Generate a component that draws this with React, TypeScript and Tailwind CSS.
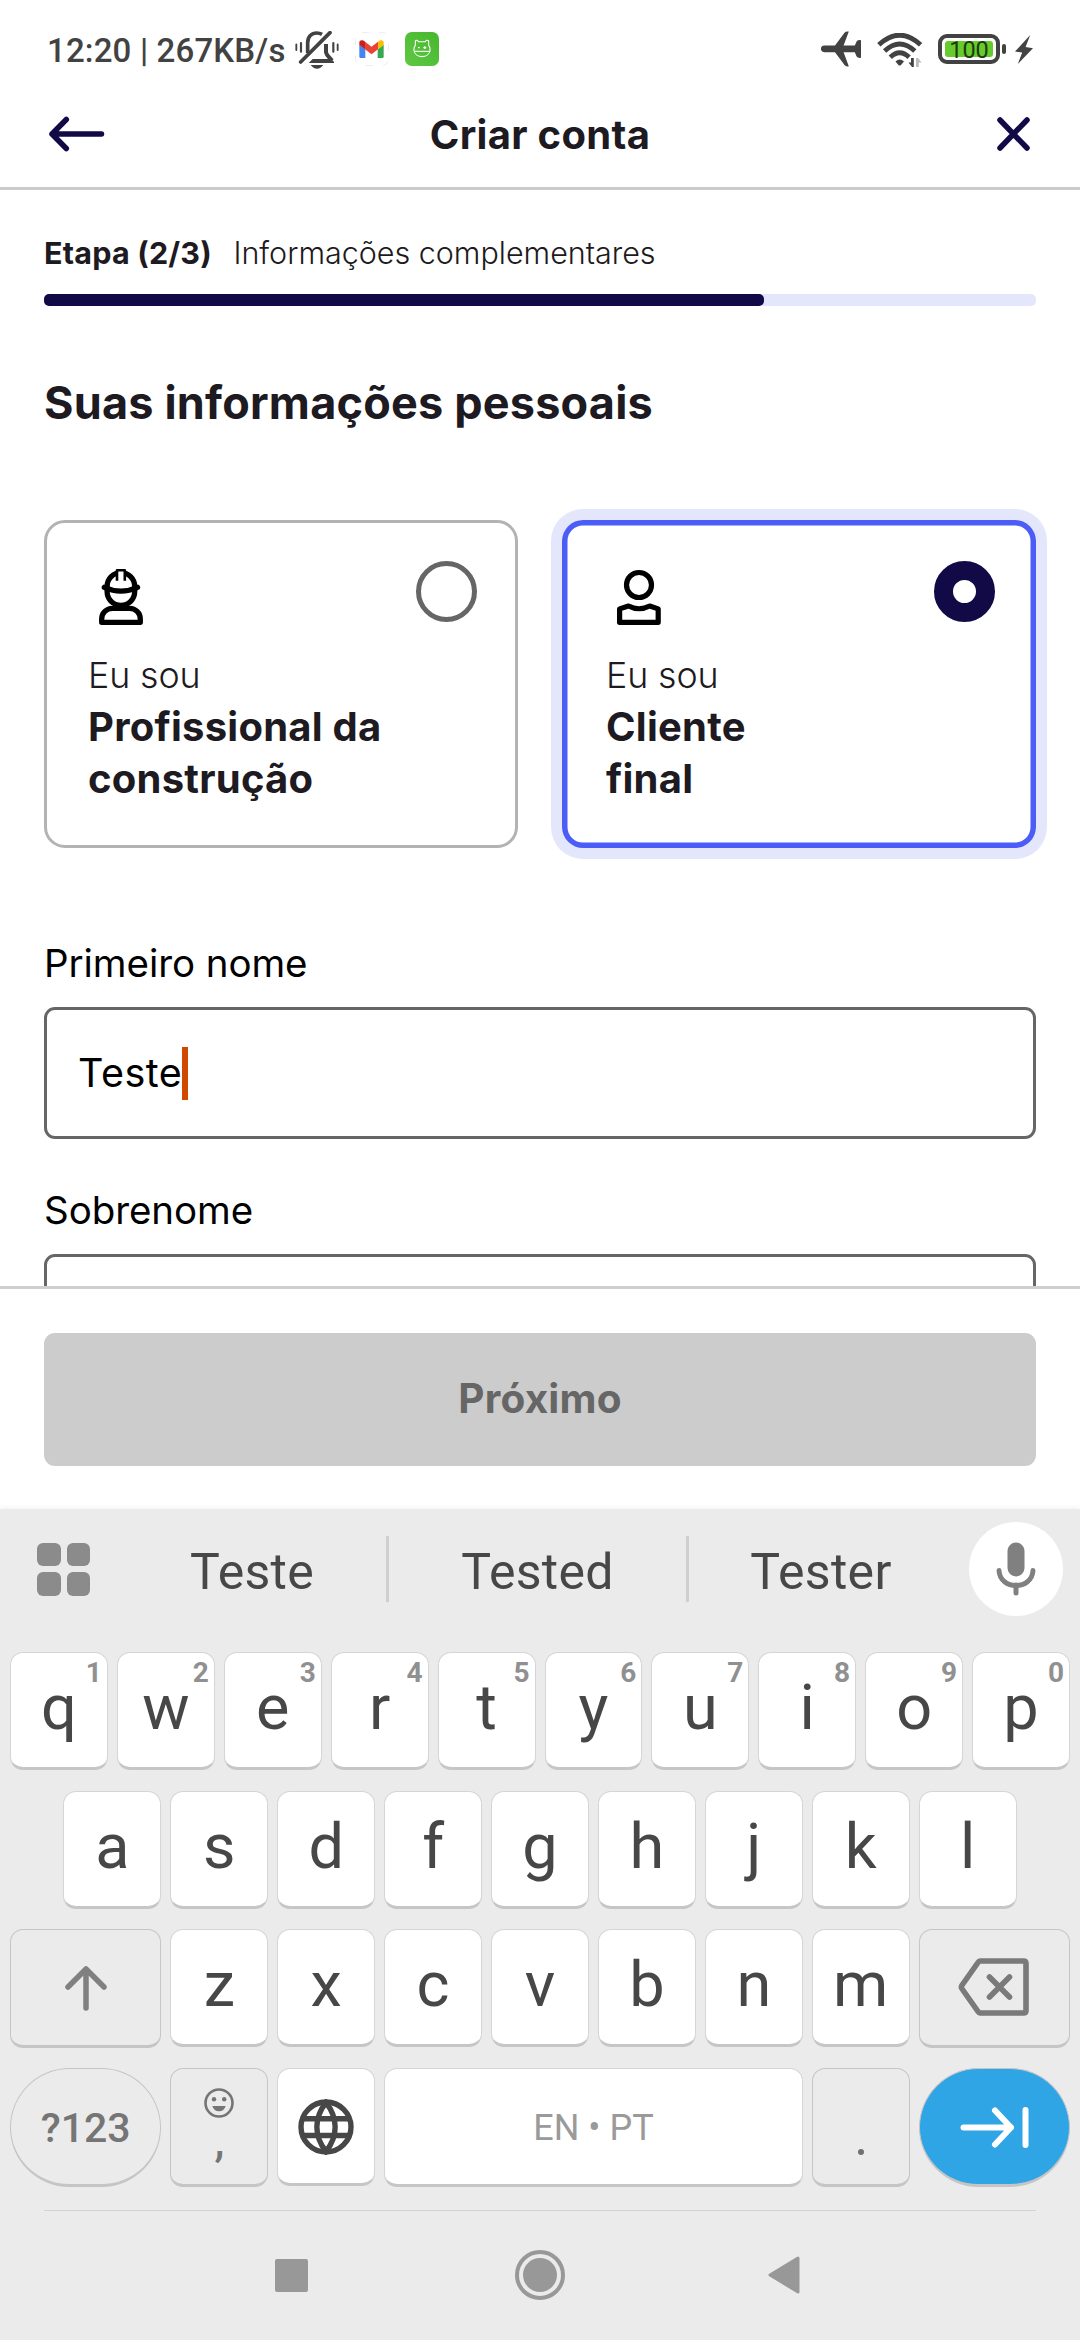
import type { ReactNode } from "react";

const NAVY = "#120a47";

/* ---------- status bar ---------- */

function BellOffIcon() {
  return (
    <svg width="44" height="38" viewBox="45 33 132 114" fill="none" stroke="#424242" strokeLinecap="round">
      <path d="M83 99V68C83 50 95 39 110 39C116 39 121 40 126 43" strokeWidth="11" strokeLinecap="butt" />
      <path d="M62 126L150 38" strokeWidth="11" />
      <path d="M138 72V97C140 107 148 112 156 122" strokeWidth="12" strokeLinecap="butt" />
      <path d="M98 117H152L162 125V129H86Z" fill="#424242" stroke="none" />
      <path d="M92 135H130Q122 146 111 146Q100 146 92 135Z" fill="#424242" stroke="none" />
      <path d="M49 73V90M173 73V90" strokeWidth="5.500" />
      <path d="M63 69V95M160 69V95" strokeWidth="6.500" />
    </svg>
  );
}

function GmailIcon() {
  return (
    <svg width="34" height="34" viewBox="227 36 102 102">
      <rect x="228.500" y="37.500" width="99" height="99" rx="19" fill="#fff" stroke="#e6e6e6" strokeWidth="2" strokeDasharray="22 30" />
      <path d="M240 74L258 88V114H244Q240 114 240 110Z" fill="#4285f4" />
      <path d="M313 74L295 88V114H309Q313 114 313 110Z" fill="#34a853" />
      <path d="M257 65L276.500 80L296 65V88L276.500 103L257 88Z" fill="#ea4335" />
      <path d="M240 75V68C240 59 250 59 257 65V88Z" fill="#c5221f" />
      <path d="M313 75V68C313 59 303 59 296 65V88Z" fill="#fbbc04" />
    </svg>
  );
}

function GreenAppIcon() {
  return (
    <svg width="34" height="34" viewBox="375 36 102 102">
      <defs>
        <linearGradient id="green-app" x1="1" y1="0" x2="0" y2="1">
          <stop offset="0" stopColor="#46b72d" />
          <stop offset="1" stopColor="#60c844" />
        </linearGradient>
      </defs>
      <rect x="375" y="36" width="102" height="102" rx="20" fill="url(#green-app)" />
      <g fill="none" stroke="#fff" strokeWidth="3.200" strokeLinejoin="round">
        <path d="M406 76V63Q411 58 415 65H436Q440 58 446 63V76L450 84V93A24.500 21 0 0 1 402 93V84Z" />
        <path d="M402 94H450" />
        <path d="M414 83H419M430 83H439M434.500 79V87" strokeWidth="4" />
      </g>
    </svg>
  );
}

function PlaneIcon() {
  return (
    <svg width="40" height="36" viewBox="0 0 40 36" fill="#424242">
      <path d="M3.300 14.400H14L23.500 1.800Q24.800 0 27.800 .5L22.600 14.400H33.800L35.600 10.400Q36.800 8.800 40 9.200V26.800Q36.800 27.200 35.600 25.600L33.800 21.200H22.600L27.800 35.300Q24.800 36 23.500 34L14 21.200H3.300A3.400 3.400 0 0 1 3.300 14.400Z" />
    </svg>
  );
}

function WifiIcon() {
  return (
    <svg width="46" height="35" viewBox="0 0 46 35" fill="none" stroke="#424242" strokeWidth="4.800">
      <path d="M1.800 11.800Q22.700 -7.500 43.600 11.800" />
      <path d="M7.600 18Q22.700 3.800 37.800 18" />
      <path d="M13.300 24.300Q22.700 15.200 32.100 24.300" />
      <path d="M18.500 28.600Q22.700 24.400 27 28.600L24 31.900Q22.700 33 21.400 31.900Z" fill="#424242" stroke="none" />
      <path d="M36.800 25V34H35L31.500 29.500H34V25Z" fill="#424242" stroke="none" />
      <path d="M39 34V25H41L44.600 29.500H41.800V34Z" fill="#bdbdbd" stroke="none" />
    </svg>
  );
}

function StatusBar() {
  return (
    <div className="flex h-[82px] items-start pl-[47px] pr-[47px] font-[Roboto] text-[#424242]">
      <span className="w-[248px] whitespace-nowrap pt-[31px] text-[33px] font-medium leading-[40px] tracking-[0.16px]">
        12:20 | 267KB/s
      </span>
      <div className="mt-[31px]">
        <BellOffIcon />
      </div>
      <div className="ml-[16px] mt-[32px] flex gap-[16px]">
        <GmailIcon />
        <GreenAppIcon />
      </div>
      <div className="ml-auto flex items-start">
        <div className="mt-[31px]">
          <PlaneIcon />
        </div>
        <div className="ml-[16px] mt-[33px]">
          <WifiIcon />
        </div>
        <div className="ml-[15px] mt-[34px] flex h-[30px] w-[62px] rounded-[9px] border-4 border-[#424242] p-[3px]">
          <div className="flex w-full justify-center rounded-[3px] bg-[#66cb2d] text-[23.500px] leading-[18px] text-[#1f3a10]">100</div>
        </div>
        <div className="ml-[2px] mt-[44px] h-[10px] w-[4px] rounded-[2px] bg-[#424242]" />
        <svg className="ml-[9px] mt-[35px]" width="18" height="29" viewBox="0 0 18 29" fill="#424242">
          <path d="M15.200 0L0 16.500L7.200 17.500L2.800 29L18 13.200L10.600 12Z" />
        </svg>
      </div>
    </div>
  );
}

/* ---------- app ---------- */

function Header() {
  return (
    <header className="flex h-[108px] items-center justify-between border-b-[3px] border-[#cbcbcb] pl-[48px] pr-[48px]">
      <svg className="mb-[1px]" width="58" height="38" viewBox="0 0 58 38" fill="none" stroke={NAVY} strokeWidth="5.500" strokeLinecap="round" strokeLinejoin="round">
        <path d="M53.500 19H4M18.300 4.500L4 19L18.300 33.500" />
      </svg>
      <h1 className="text-[40px] font-bold leading-[48px] tracking-[0.3px]">Criar conta</h1>
      <div className="mb-[1px] flex w-[58px] justify-end">
        <svg width="36" height="38" viewBox="0 0 36 38" fill="none" stroke={NAVY} strokeWidth="5.500" strokeLinecap="round">
          <path d="M4 5L31 33M31 5L4 33" />
        </svg>
      </div>
    </header>
  );
}

function WorkerIcon() {
  return (
    <svg className="ml-[2px]" width="62" height="66" viewBox="0 0 62 66" fill="none" stroke="#000" strokeWidth="5.300" strokeLinecap="round" strokeLinejoin="round">
      <path d="M17.100 25.500a13.800 13.800 0 0 1 27.600 0v5a13.800 13.800 0 0 1 -27.600 0z" />
      <path d="M14.300 26.300Q31 33.800 47.500 26.300" />
      <path d="M27 19.700V9.300H34.800V19.700" fill="#fff" strokeWidth="2.600" strokeLinecap="butt" />
      <path d="M11.700 61.300H50.300V58C50.300 52 45.500 47.400 39.500 47.400H22.500C16.500 47.400 11.700 52 11.700 58Z" />
    </svg>
  );
}

function PersonIcon() {
  return (
    <svg width="62" height="66" viewBox="0 0 62 66" fill="none" stroke="#000" strokeWidth="5.200" strokeLinecap="round" strokeLinejoin="round">
      <circle cx="33" cy="24" r="12.500" />
      <path d="M13.600 61.300V47.900L22.500 45Q33 50.500 43.700 45L52.200 47.900V61.300Z" />
    </svg>
  );
}

function Choice({ icon, lines, selected }: { icon: ReactNode; lines: [string, string]; selected?: boolean }) {
  return (
    <div
      className={
        selected
          ? "h-[327.700px] flex-1 rounded-[21px] pl-[44px] pr-[41px] pt-[41px] shadow-[0_0_0_11px_#e4e7fb,inset_0_0_0_5.500px_#4b5df6]"
          : "h-[327.700px] flex-1 rounded-[21px] border-[3px] border-[#b3b3b3] pl-[41px] pr-[38px] pt-[38px]"
      }
    >
      <div className="flex h-[61px] items-start justify-between">
        {icon}
        {selected ? (
          <span className="size-[61px] rounded-full border-[19px] border-[#120a47]" />
        ) : (
          <span className="size-[61px] rounded-full border-[5.500px] border-[#666]" />
        )}
      </div>
      <p className="mt-[27px] text-[35.750px] font-[340] leading-[52px] tracking-[-0.1px]">Eu sou</p>
      <p className="text-[40px] font-bold leading-[52px] tracking-[0.24px]">
        {lines[0]}
        <br />
        {lines[1]}
      </p>
    </div>
  );
}

function Form() {
  return (
    <main className="h-[1096px] overflow-hidden px-[44px] pt-[43px]">
      <div className="flex gap-[21.500px] text-[30.500px] leading-[40px]">
        <span className="font-bold tracking-[0.2px]">Etapa (2/3)</span>
        <span className="font-[340] tracking-[-0.02px]">Informações complementares</span>
      </div>
      <div className="mt-[21px] h-[11.500px] rounded-[5px] bg-[#e4e7fb]">
        <div className="h-full w-[720px] rounded-[5px] bg-[#120a47]" />
      </div>
      <h2 className="mt-[71px] text-[45px] font-bold leading-[52px] tracking-[0.2px]">Suas informações pessoais</h2>
      <div className="mt-[91.500px] flex gap-[44px]">
        <Choice icon={<WorkerIcon />} lines={["Profissional da", "construção"]} />
        <Choice icon={<PersonIcon />} lines={["Cliente", "final"]} selected />
      </div>
      <div className="mt-[91.300px] text-[38.500px] leading-[48px] text-black">
        <p className="font-[380] tracking-[-0.06px]">Primeiro nome</p>
        <div className="mt-[20px] flex h-[132.500px] items-center rounded-[11px] border-[3px] border-[#666] pl-[31px]">
          <span className="text-[39.500px] font-[380] tracking-[0.5px]">Teste</span>
          <span className="h-[53px] w-[6px] bg-[#d14900]" />
        </div>
        <p className="mt-[47px] font-[380] tracking-[-0.06px]">Sobrenome</p>
        <div className="mt-[20px] h-[132.500px] rounded-[11px] border-[3px] border-[#666]" />
      </div>
    </main>
  );
}

function Footer() {
  return (
    <footer className="h-[223px] border-t-[3px] border-[#cfcfcf] px-[44px] pt-[44px]">
      <button className="block h-[132.500px] w-full rounded-[11px] bg-[#ccc] text-[40.500px] font-bold leading-[48px] tracking-[0.2px] text-[#666]">
        Próximo
      </button>
    </footer>
  );
}

/* ---------- keyboard ---------- */

const LIGHT_KEY =
  "relative flex h-[118px] w-[97.900px] justify-center rounded-[13px] border border-b-[3px] border-[#d5d5d5] border-b-[#c6c6c6] bg-white";
const DIM_KEY =
  "relative flex h-[119px] w-[97.900px] justify-center rounded-[13px] border border-b-[3px] border-[#c5c5c5]";

function Letter({ char, hint }: { char: string; hint?: string }) {
  return (
    <div className={LIGHT_KEY}>
      <span className="text-[63px] leading-[110px]">{char}</span>
      {hint && (
        <span className="absolute right-[5px] top-0 text-[28px] font-bold leading-[39px] text-[#909090]">{hint}</span>
      )}
    </div>
  );
}

function Suggestions() {
  return (
    <div className="flex h-[120px] items-center text-[50px] tracking-[0.3px]">
      <div className="ml-[37px] grid w-[81px] grid-cols-[23.500px_23.500px] gap-[6px]">
        {[0, 1, 2, 3].map((i) => (
          <span key={i} className="size-[23.500px] rounded-[6px] bg-[#8b8b8b]" />
        ))}
      </div>
      <span className="w-[268px] pt-[6px] text-center leading-[60px]">Teste</span>
      <span className="h-[66px] w-[3px] bg-[#cfcfcf]" />
      <span className="w-[297px] pt-[6px] text-center leading-[60px]">Tested</span>
      <span className="h-[66px] w-[3px] bg-[#cfcfcf]" />
      <span className="w-[264px] pt-[6px] text-center leading-[60px]">Tester</span>
      <div className="ml-[16px] flex size-[94px] items-center justify-center rounded-full bg-white">
        <svg width="40" height="54" viewBox="0 0 40 54" fill="none">
          <rect x="11.500" y="0.500" width="17" height="34" rx="8.500" fill="#808080" />
          <path d="M3 28.500C4 48.500 36 48.500 37 28.500" stroke="#808080" strokeWidth="5" strokeLinecap="round" />
          <path d="M20 43V51" stroke="#808080" strokeWidth="5" strokeLinecap="round" />
        </svg>
      </div>
    </div>
  );
}

function Keyboard() {
  return (
    <section className="h-[831px] bg-[#ebebeb] font-[Roboto] text-[#474747] shadow-[0_-1px_6px_rgba(0,0,0,0.06)]">
      <Suggestions />
      <div className="mt-[23px] flex flex-col gap-[20.660px]">
        <div className="flex h-[118px] justify-center gap-[9px]">
          {[..."qwertyuiop"].map((c, i) => (
            <Letter key={c} char={c} hint={"1234567890"[i]} />
          ))}
        </div>
        <div className="flex h-[118px] justify-center gap-[9px]">
          {[..."asdfghjkl"].map((c) => (
            <Letter key={c} char={c} />
          ))}
        </div>
        <div className="flex h-[118px] justify-center gap-[9px]">
          <div className="flex h-[119px] w-[151.400px] justify-center rounded-[13px] border border-b-[3px] border-[#c5c5c5] pt-[35px]">
            <svg width="46" height="50" viewBox="0 0 46 50" fill="none" stroke="#808080" strokeWidth="5.500" strokeLinecap="round" strokeLinejoin="round">
              <path d="M23 43V4M5 22L23 4L41 22" />
            </svg>
          </div>
          {[..."zxcvbnm"].map((c) => (
            <Letter key={c} char={c} />
          ))}
          <div className="flex h-[119px] w-[151.400px] justify-center rounded-[13px] border border-b-[3px] border-[#c5c5c5] pt-[28px]">
            <svg width="72" height="58" viewBox="0 0 72 58" fill="none" stroke="#7a7a7a" strokeWidth="5.600" strokeLinecap="round" strokeLinejoin="round">
              <path d="M22 3H65.500Q68 3 68 5.500V52.500Q68 55 65.500 55H22Q21 55 20 53.500L3.800 30.500Q3 29 3.800 27.500L20 4.500Q21 3 22 3Z" />
              <path d="M31.500 19L51.500 39M51.500 19L31.500 39" />
            </svg>
          </div>
        </div>
        <div className="flex h-[118px] justify-center gap-[9px]">
          <div className="flex h-[119px] w-[151.400px] justify-center rounded-[60px] border border-b-[3px] border-[#c5c5c5] text-[41px] font-medium leading-[118px] text-[#757575]">
            <span>?123</span>
          </div>
          <div className={DIM_KEY}>
            <div className="flex flex-col items-center pt-[19px] text-[#757575]">
              <svg width="30" height="30" viewBox="0 0 30 30" fill="#757575">
                <circle cx="15" cy="15" r="13.500" fill="none" stroke="#757575" strokeWidth="2.600" />
                <circle cx="10" cy="11.300" r="2.200" />
                <circle cx="20.200" cy="11.300" r="2.200" />
                <path d="M8.300 18H21.700Q20 23.300 15 23.300Q10 23.300 8.300 18Z" />
              </svg>
              <span className="text-[44px] font-medium leading-[47px]">,</span>
            </div>
          </div>
          <div className={LIGHT_KEY}>
            <svg className="mt-[30px]" width="56" height="56" viewBox="0 0 56 56" fill="none" stroke="#474747" strokeWidth="5.400">
              <circle cx="28" cy="28" r="25" />
              <path d="M4.500 19.800H51.500M4.500 36.500H51.500" />
              <path d="M28 3.500C15.800 19 15.800 37 28 52.500C40.200 37 40.200 19 28 3.500Z" />
            </svg>
          </div>
          <div className="flex h-[119px] w-[418.600px] justify-center rounded-[13px] border border-b-[3px] border-[#d5d5d5] border-b-[#c6c6c6] bg-white text-[36px] leading-[119px] text-[#9a9a9a]">
            <span>EN • PT</span>
          </div>
          <div className={DIM_KEY}>
            <span className="mt-[80px] size-[6px] rounded-full bg-[#707070]" />
          </div>
          <div className="flex h-[119px] w-[151.400px] justify-center rounded-[60px] border border-b-[3px] border-[#c5c5c5] bg-[#2fa5e6] pt-[37px]">
            <svg width="70" height="43" viewBox="0 0 70 43" fill="none" stroke="#fff" strokeWidth="6" strokeLinecap="round" strokeLinejoin="round">
              <path d="M4.500 21.500H52M36 4.500L52 21.500L36 38.500M66.500 4V39" />
            </svg>
          </div>
        </div>
      </div>
      <div className="mx-[44px] mt-[24px] h-px bg-[#d2d2d2]" />
      <div className="flex h-[129px] items-center pl-[275px]">
        <span className="h-[33px] w-[33px] rounded-[2px] bg-[#989898]" />
        <span className="ml-[207px] flex size-[50px] items-center justify-center rounded-full border-4 border-[#989898]">
          <span className="size-[34px] shrink-0 rounded-full bg-[#989898]" />
        </span>
        <svg className="ml-[202px]" width="34" height="38" viewBox="0 0 34 38" fill="#989898" stroke="#989898" strokeWidth="3" strokeLinejoin="round">
          <path d="M31 2L3 19L31 36Z" />
        </svg>
      </div>
    </section>
  );
}

export default function App() {
  return (
    <div className="h-[2340px] w-[1080px] overflow-hidden bg-white font-[Inter] text-[#1d1a21]">
      <StatusBar />
      <Header />
      <Form />
      <Footer />
      <Keyboard />
    </div>
  );
}
